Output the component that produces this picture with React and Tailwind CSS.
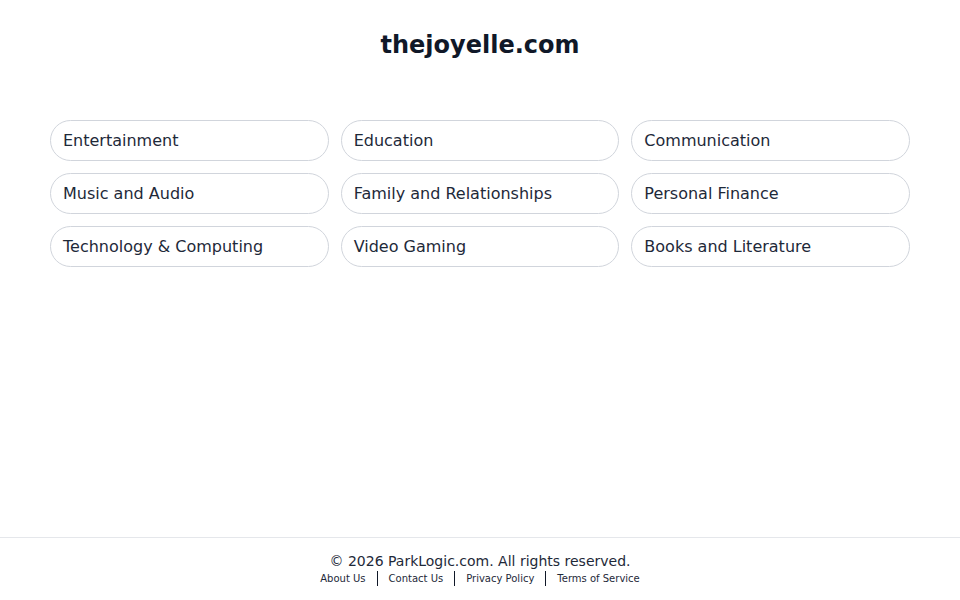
import React from 'react';

const categories = [
    'Entertainment',
    'Education',
    'Communication',
    'Music and Audio',
    'Family and Relationships',
    'Personal Finance',
    'Technology & Computing',
    'Video Gaming',
    'Books and Literature',
];

const links = ['About Us', 'Contact Us', 'Privacy Policy', 'Terms of Service'];

const App = () => {
    return (
        <div className="min-h-screen flex flex-col bg-white text-gray-900" style={{ fontFamily: '"DejaVu Sans", sans-serif' }}>
            <main className="flex-1 px-[50px] pt-[29px]">
                <h1 className="text-2xl leading-8 font-bold text-center text-gray-900">thejoyelle.com</h1>
                <div className="grid grid-cols-3 gap-x-3 gap-y-3 mt-[59px]">
                    {categories.map(name => (
                        <a
                            key={name}
                            href="#"
                            className="h-[41px] flex items-center pl-3 pr-[13px] border border-gray-300 rounded-full text-base text-gray-800"
                        >
                            {name}
                        </a>
                    ))}
                </div>
            </main>
            <footer className="border-t border-gray-200 pt-[14px] pb-[14px] text-center">
                <p className="text-sm leading-[18px] text-gray-800">© 2026 ParkLogic.com. All rights reserved.</p>
                <div className="flex justify-center items-center text-[10px] leading-[14px] text-gray-800 mt-px">
                    {links.map((link, i) => (
                        <React.Fragment key={link}>
                            {i > 0 && <span className="border-l border-gray-900 h-[15px] mx-[11px]"></span>}
                            <a href="#">{link}</a>
                        </React.Fragment>
                    ))}
                </div>
            </footer>
        </div>
    );
};

export default App;
